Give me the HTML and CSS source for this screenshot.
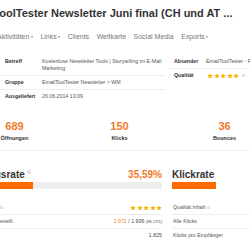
FILE: index.html
```html
<!DOCTYPE html>
<html lang="de">
<head>
<meta charset="utf-8">
<title>EmailToolTester Newsletter Juni final</title>
<link rel="stylesheet" href="styles.css">
</head>
<body>
<svg class="defs" width="0" height="0" aria-hidden="true">
  <defs>
    <symbol id="star" viewBox="0 0 20 20"><path d="M10 1.2l2.7 5.6 6.1.8-4.5 4.2 1.1 6.1L10 15l-5.4 2.9 1.1-6.1L1.2 7.6l6.1-.8z"/></symbol>
    <symbol id="info" viewBox="0 0 10 10"><circle cx="5" cy="5" r="4.2" fill="none" stroke="currentColor" stroke-width="0.9"/><rect x="4.45" y="4.3" width="1.1" height="3.2"/><circle cx="5" cy="2.9" r="0.7"/></symbol>
  </defs>
</svg>
<div class="page">
  <h1 class="title">EmailToolTester Newsletter Juni final (CH und AT ...</h1>
  <nav class="tabs">
    <span class="tab">Übersicht</span>
    <span class="tab dd">Aktivitäten</span>
    <span class="tab dd">Links</span>
    <span class="tab">Clients</span>
    <span class="tab">Weltkarte</span>
    <span class="tab">Social Media</span>
    <span class="tab dd">Exports</span>
  </nav>

  <section class="info">
    <div class="thumb"></div>
    <table class="meta meta-left">
      <tr><td class="k">Betreff</td><td class="v">Kostenlose Newsletter Tools | Storytelling im E-Mail Marketing</td></tr>
      <tr><td class="k">Gruppe</td><td class="v">EmailToolTester Newsletter &gt; WM</td></tr>
      <tr><td class="k">Ausgeliefert</td><td class="v">26.06.2014 13:09</td></tr>
    </table>
    <table class="meta meta-right">
      <tr><td class="k">Absender</td><td class="v nowrap">EmailToolTester - Robert Brandl</td></tr>
      <tr><td class="k">Qualität</td><td class="v"><span class="stars"><svg><use href="#star"/></svg><svg><use href="#star"/></svg><svg><use href="#star"/></svg><svg><use href="#star"/></svg><svg><use href="#star"/></svg></span><svg class="info-ic"><use href="#info"/></svg></td></tr>
    </table>
  </section>

  <section class="stats">
    <div class="stat"><div class="num">689</div><div class="lbl">Öffnungen</div></div>
    <div class="stat"><div class="num">150</div><div class="lbl">Klicks</div></div>
    <div class="stat"><div class="num">36</div><div class="lbl">Bounces</div></div>
  </section>

  <section class="rates">
    <div class="rate">
      <div class="rate-head"><h2>Öffnungsrate<svg class="info-ic sup"><use href="#info"/></svg></h2><span class="pct">35,59%</span></div>
      <div class="track"><div class="fill" style="width:35.59%"></div></div>
      <table class="kv">
        <tr><td class="k">Qualität Betreff<svg class="info-ic"><use href="#info"/></svg></td><td class="v"><span class="stars"><svg><use href="#star"/></svg><svg><use href="#star"/></svg><svg><use href="#star"/></svg><svg><use href="#star"/></svg><svg><use href="#star"/></svg></span></td></tr>
        <tr><td class="k">Tatsächlich zugestellt</td><td class="v"><span class="hl">1.972</span> / 1.936 <small>(98,17%)</small></td></tr>
        <tr><td class="k">Öffnungen</td><td class="v">1.825</td></tr>
      </table>
    </div>
    <div class="rate">
      <div class="rate-head"><h2>Klickrate</h2><span class="pct">21,77%</span></div>
      <div class="track track-plain"><div class="fill" style="width:21.77%"></div></div>
      <table class="kv">
        <tr><td class="k">Qualität Inhalt<svg class="info-ic"><use href="#info"/></svg></td><td class="v"><span class="stars"><svg><use href="#star"/></svg><svg><use href="#star"/></svg><svg><use href="#star"/></svg><svg><use href="#star"/></svg><svg><use href="#star"/></svg></span></td></tr>
        <tr><td class="k">Alle Klicks</td><td class="v">150</td></tr>
        <tr><td class="k">Klicks pro Empfänger</td><td class="v">0,08</td></tr>
      </table>
    </div>
  </section>
</div>
</body>
</html>
```

FILE: styles.css
```css
html, body {
  margin: 0;
  padding: 0;
  background: #fff;
}
body {
  width: 250px;
  height: 250px;
  overflow: hidden;
  font-family: "Liberation Sans", Arial, Helvetica, sans-serif;
  color: #333;
}
.defs { position: absolute; width: 0; height: 0; }

.page {
  margin-left: -38px;
  width: 460px;
  padding-top: 6px;
}

.title {
  margin: 0;
  padding-left: 2px;
  font-size: 11px;
  line-height: 14px;
  font-weight: bold;
  color: #333;
  white-space: nowrap;
}

.tabs {
  display: flex;
  gap: 7.5px;
  margin: 12px 0 0 -2px;
  font-size: 7px;
  line-height: 10px;
  color: #777;
  white-space: nowrap;
}
.tab.dd::after {
  content: "";
  display: inline-block;
  margin-left: 1.5px;
  vertical-align: middle;
  border-left: 1.5px solid transparent;
  border-right: 1.5px solid transparent;
  border-top: 2px solid #888;
}

.info {
  display: flex;
  align-items: flex-start;
  margin-top: 13px;
}
.thumb { width: 38px; flex: none; }

.meta {
  border-collapse: collapse;
  font-size: 5.25px;
  line-height: 7px;
}
.meta td {
  vertical-align: top;
  padding: 3px 0 3px 5px;
}
.meta tr:not(:last-child) td { border-bottom: 1px solid #eee; }
.meta .k { font-weight: bold; color: #333; white-space: nowrap; }
.meta .v { color: #555; }
.meta-left { width: 165px; flex: none; }
.meta-left .k { width: 32px; }
.meta-right { margin-left: 5px; width: 160px; flex: none; }
.meta-right td { padding-left: 4px; }
.meta-right .k { width: 28px; }
.nowrap { white-space: nowrap; }

.stars { display: inline-flex; gap: 0.5px; vertical-align: middle; }
.stars svg { width: 6px; height: 6px; fill: #f6b400; }
.meta .stars { margin-left: 1px; }

.info-ic {
  width: 3.6px;
  height: 3.6px;
  color: #999;
  fill: #999;
  margin-left: 2px;
  vertical-align: middle;
}
.meta .info-ic { margin-left: 3px; }

.stats {
  display: grid;
  grid-template-columns: repeat(3, 105px);
  width: 460px;
  margin-top: 17px;
  padding-bottom: 8px;
  border-bottom: 1px solid #eee;
  text-align: center;
}
.num {
  font-size: 11px;
  line-height: 13px;
  font-weight: bold;
  color: #f07a2c;
}
.lbl {
  margin-top: 1.5px;
  font-size: 5.5px;
  line-height: 7px;
  font-weight: bold;
  color: #333;
}

.rates {
  display: grid;
  grid-template-columns: 200px 200px;
  column-gap: 10px;
  margin-top: 18px;
}
.rate-head {
  display: flex;
  justify-content: space-between;
  align-items: baseline;
}
.rate-head h2 {
  margin: 0;
  font-size: 10px;
  line-height: 12px;
  font-weight: bold;
  color: #333;
}
.rate-head .sup { vertical-align: top; margin-top: 1px; width: 4px; height: 4px; margin-left: 2.5px; }
.pct {
  font-size: 10px;
  line-height: 12px;
  font-weight: bold;
  color: #f07a2c;
}
.track {
  height: 7px;
  margin-top: 1px;
  background: #eee;
}
.track-plain { background: transparent; }
.fill { height: 100%; background: #ff6a00; }

.kv {
  width: 100%;
  margin-top: 12.5px;
  border-collapse: collapse;
  font-size: 5.25px;
  line-height: 7px;
  color: #555;
}
.kv td { padding: 3px 0 3px 1px; white-space: nowrap; }
.kv tr:not(:last-child) td { border-bottom: 1px solid #eee; }
.kv .v { text-align: right; color: #444; }
.kv .hl { color: #f07a2c; }
.kv small { font-size: 4px; }
```
